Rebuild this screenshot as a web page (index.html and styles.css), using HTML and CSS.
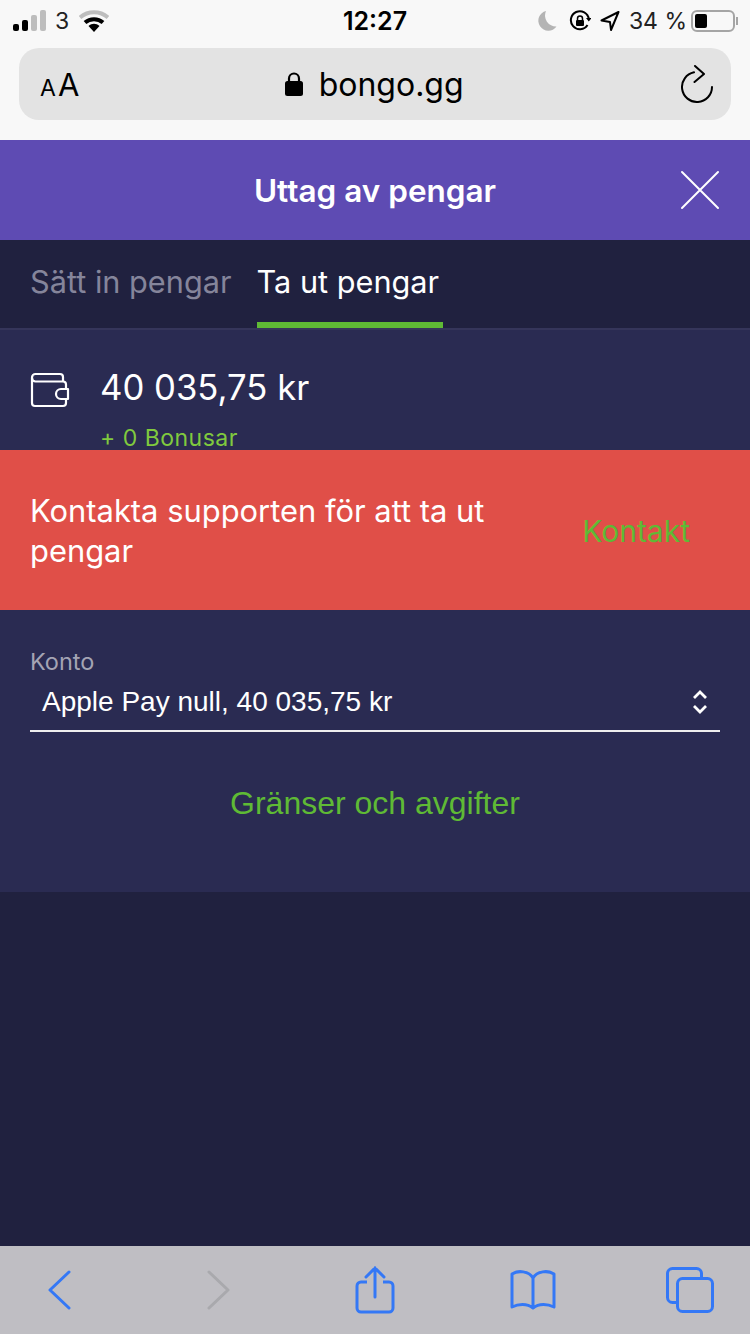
FILE: index.html
```html
<!DOCTYPE html>
<html lang="sv">
<head>
  <meta charset="UTF-8">
  <title>Uttag av pengar</title>
  <link rel="stylesheet" href="styles.css">
</head>
<body>

  <div class="browser-top">
    <div class="statusbar">
      <div class="status-left">
        <svg class="signal" width="34" height="22" viewBox="0 0 34 22">
          <rect x="0" y="14" width="6" height="7" rx="2" fill="#000"/>
          <rect x="9" y="10" width="6" height="11" rx="2" fill="#000"/>
          <rect x="18" y="5" width="6" height="16" rx="2" fill="#bdbdbd"/>
          <rect x="27" y="0" width="6" height="21" rx="2" fill="#bdbdbd"/>
        </svg>
        <span class="carrier">3</span>
        <svg class="wifi" width="30" height="22" viewBox="0 0 30 22">
          <path d="M1 7.500C9 .5 21 .5 29 7.500" fill="none" stroke="#bdbdbd" stroke-width="4"/>
          <path d="M6 12.500C11 8 19 8 24 12.500" fill="none" stroke="#000" stroke-width="4"/>
          <path d="M9.500 16C13 13 17 13 20.500 16L15 22Z" fill="#000"/>
        </svg>
      </div>
      <div class="clock">12:27</div>
      <div class="status-right">
        <svg class="moon" width="20" height="22" viewBox="0 0 20 22">
          <path d="M9 1a10 10 0 1 0 10.500 15.500A11 11 0 0 1 9 1Z" fill="#b4b4b4"/>
        </svg>
        <svg class="rotlock" width="22" height="22" viewBox="0 0 22 22">
          <path d="M18.500 15A9 9 0 1 1 19.800 9" fill="none" stroke="#000" stroke-width="2"/>
          <path d="M17 8h5.500l-2.700 3.500Z" fill="#000"/>
          <rect x="7" y="10" width="8" height="6" rx="1" fill="#000"/>
          <path d="M8.500 10V8.500a2.500 2.500 0 0 1 5 0V10" fill="none" stroke="#000" stroke-width="1.500"/>
        </svg>
        <svg class="arrow" width="20" height="22" viewBox="0 0 20 22">
          <path d="M18.500 2 1.500 10.500l8.500 1.500 1 8Z" fill="none" stroke="#000" stroke-width="2" stroke-linejoin="round"/>
        </svg>
        <span class="percent">34 %</span>
        <div class="battery"><div class="battery-level"></div></div>
        <div class="battery-cap"></div>
      </div>
    </div>
    <div class="urlbar">
      <div class="text-size"><span class="small-a">A</span><span class="big-a">A</span></div>
      <div class="address">
        <svg width="18" height="26" viewBox="0 0 18 26">
          <path d="M4 11V7.500a5 5 0 0 1 10 0V11" fill="none" stroke="#000" stroke-width="2.200"/>
          <rect x="0" y="10" width="18" height="15" rx="2.500" fill="#000"/>
        </svg>
        <span>bongo.gg</span>
      </div>
      <svg class="reload" width="32" height="38" viewBox="0 0 32 38">
        <path d="M13 7.300A15 15 0 1 0 31 22" fill="none" stroke="#000" stroke-width="2" stroke-linecap="round"/>
        <path d="M14 1l9 8-9.500 8" fill="none" stroke="#000" stroke-width="2" stroke-linecap="round" stroke-linejoin="round"/>
      </svg>
    </div>
  </div>

  <div class="modal-header">
    <h2>Uttag av pengar</h2>
    <svg class="close" width="40" height="40" viewBox="0 0 40 40">
      <path d="M2 2l36 36M38 2 2 38" stroke="#fff" stroke-width="2" stroke-linecap="round"/>
    </svg>
  </div>

  <div class="tabs">
    <a class="tab">Sätt in pengar</a>
    <a class="tab active">Ta ut pengar</a>
  </div>

  <div class="balance">
    <svg class="wallet" width="40" height="36" viewBox="0 0 40 36">
      <path d="M33 9.500V5a3 3 0 0 0-3-3H5.500A3.500 3.500 0 0 0 2 5.500V31a3 3 0 0 0 3 3h28a3 3 0 0 0 3-3v-4" fill="none" stroke="#fff" stroke-width="2.200"/>
      <path d="M2 6a3.500 3.500 0 0 0 3.500 3.500H33a3 3 0 0 1 3 3V17" fill="none" stroke="#fff" stroke-width="2.200"/>
      <path d="M38 17H31a5 5 0 0 0 0 10h7Z" fill="none" stroke="#fff" stroke-width="2.200" stroke-linejoin="round"/>
    </svg>
    <div>
      <div class="amount">40 035,75 kr</div>
      <div class="bonus">+ 0 Bonusar</div>
    </div>
  </div>

  <div class="alert">
    <p>Kontakta supporten för att ta ut pengar</p>
    <a class="alert-link">Kontakt</a>
  </div>

  <div class="form-section">
    <label>Konto</label>
    <div class="select">
      <span>Apple Pay null, 40 035,75 kr</span>
      <svg width="16" height="24" viewBox="0 0 16 24">
        <path d="M2 8l6-6 6 6M2 16l6 6 6-6" fill="none" stroke="#fff" stroke-width="2.800"/>
      </svg>
    </div>
    <a class="limits">Gränser och avgifter</a>
  </div>

  <div class="filler"></div>

  <div class="toolbar">
    <div class="tool">
      <svg width="26" height="40" viewBox="0 0 26 40">
        <path d="M22 2 3 20l19 18" fill="none" stroke="#3478f6" stroke-width="3" stroke-linecap="round" stroke-linejoin="round"/>
      </svg>
    </div>
    <div class="tool">
      <svg width="26" height="40" viewBox="0 0 26 40">
        <path d="M4 2l19 18L4 38" fill="none" stroke="#a9a9ad" stroke-width="3" stroke-linecap="round" stroke-linejoin="round"/>
      </svg>
    </div>
    <div class="tool">
      <svg width="40" height="48" viewBox="0 0 40 48">
        <path d="M12 16H6a4 4 0 0 0-4 4v22a4 4 0 0 0 4 4h28a4 4 0 0 0 4-4V20a4 4 0 0 0-4-4h-6" fill="none" stroke="#3478f6" stroke-width="3"/>
        <path d="M20 31V2M11 11l9-9 9 9" fill="none" stroke="#3478f6" stroke-width="3" stroke-linecap="round"/>
      </svg>
    </div>
    <div class="tool">
      <svg width="46" height="40" viewBox="0 0 46 40">
        <path d="M23 8C19 1 8 0 2 4v33c6-3 15-4 21 1 6-5 15-4 21-1V4C38 0 27 1 23 8Zm0 0v30" fill="none" stroke="#3478f6" stroke-width="3" stroke-linejoin="round"/>
      </svg>
    </div>
    <div class="tool">
      <svg width="48" height="46" viewBox="0 0 48 46">
        <path d="M11 35.500H6.500a5 5 0 0 1-5-5V6.500a5 5 0 0 1 5-5h24a5 5 0 0 1 5 5v5" fill="none" stroke="#3478f6" stroke-width="3"/>
        <rect x="11.500" y="11.500" width="35" height="33" rx="5" fill="none" stroke="#3478f6" stroke-width="3"/>
      </svg>
    </div>
  </div>

</body>
</html>
```

FILE: styles.css
```css
html, body {
  margin: 0;
  padding: 0;
}

body {
  width: 750px;
  height: 1334px;
  display: flex;
  flex-direction: column;
  overflow: hidden;
  font-family: Inter, "Noto Sans", sans-serif;
  background: #20213f;
  color: #fff;
}

.browser-top {
  height: 140px;
  box-sizing: border-box;
  background: #f8f8f8;
  color: #000;
  padding: 0 19px;
  flex: none;
}

.statusbar {
  height: 48px;
  margin: 0 -7px;
  display: grid;
  grid-template-columns: 1fr auto 1fr;
  align-items: start;
  padding-top: 8px;
  box-sizing: border-box;
}

.status-left {
  display: flex;
  align-items: center;
  gap: 8px;
  height: 26px;
  padding-left: 1px;
}

.carrier {
  font-size: 23px;
  color: #222;
}

.wifi {
  margin-left: 2px;
}

.clock {
  font-size: 25px;
  font-weight: 600;
  line-height: 26px;
}

.status-right {
  display: flex;
  align-items: center;
  justify-content: flex-end;
  gap: 8px;
  height: 26px;
}

.moon {
  margin-right: 4px;
}

.rotlock,
.arrow {
  margin-right: 1px;
}

.percent {
  font-size: 23px;
  color: #222;
  margin-right: -4px;
  white-space: nowrap;
}

.battery {
  width: 44px;
  height: 22px;
  box-sizing: border-box;
  border: 2px solid #a5a5a5;
  border-radius: 6px;
  padding: 2px;
}

.battery-level {
  width: 12px;
  height: 14px;
  background: #000;
  border-radius: 2px;
}

.battery-cap {
  width: 2px;
  height: 8px;
  background: #a5a5a5;
  margin-left: -7px;
}

.urlbar {
  height: 72px;
  background: #e3e3e3;
  border-radius: 20px;
  display: flex;
  align-items: center;
  justify-content: space-between;
  padding: 0 18px 0 21px;
}

.text-size {
  display: flex;
  align-items: baseline;
  font-size: 31px;
  line-height: 1;
}

.small-a {
  font-size: 23px;
  margin-right: 2px;
}

.address {
  display: flex;
  align-items: center;
  gap: 16px;
  font-size: 32px;
  margin-right: 12px;
}

.modal-header {
  height: 100px;
  flex: none;
  background: #5e4bb3;
  display: flex;
  align-items: center;
  justify-content: center;
  position: relative;
}

.modal-header h2 {
  margin: 1px 0 0;
  font-size: 31.500px;
  font-weight: 600;
}

.close {
  position: absolute;
  right: 30px;
  top: 30px;
}

.tabs {
  height: 88px;
  flex: none;
  display: flex;
  gap: 25px;
  padding-left: 30px;
  border-bottom: 2px solid #35355a;
}

.tab {
  font-size: 30.700px;
  line-height: 84px;
  color: #85859b;
  height: 88px;
  box-sizing: border-box;
}

.tab.active {
  color: #fff;
  border-bottom: 6px solid #5fba35;
  padding-right: 4px;
}

.balance {
  height: 120px;
  flex: none;
  box-sizing: border-box;
  background: #2a2b52;
  display: flex;
  gap: 30px;
  padding: 33px 30px 0;
}

.wallet {
  margin-top: 9px;
}

.amount {
  font-size: 34.700px;
  line-height: 48px;
}

.bonus {
  font-size: 23px;
  line-height: 24px;
  margin-top: 15px;
  color: #80ca3e;
  letter-spacing: 0.5px;
}

.alert {
  height: 160px;
  flex: none;
  box-sizing: border-box;
  background: #e04f48;
  display: flex;
  align-items: center;
  justify-content: space-between;
  padding: 2px 60px 0 30px;
}

.alert p {
  margin: 0;
  width: 500px;
  font-size: 30.900px;
  line-height: 40.500px;
}

.alert-link {
  color: #5fba35;
  font-size: 30px;
}

.form-section {
  height: 282px;
  flex: none;
  box-sizing: border-box;
  background: #2a2b52;
  padding: 38px 30px 0;
}

.form-section label {
  display: block;
  font-size: 23.500px;
  line-height: 28px;
  color: #a4a4b4;
}

.select {
  height: 36px;
  margin-top: 4px;
  padding: 4px 12px 10px;
  border-bottom: 2px solid #eee;
  display: flex;
  align-items: center;
  justify-content: space-between;
  font-family: "Liberation Sans", Arial, sans-serif;
  font-size: 28px;
}

.limits {
  display: block;
  margin-top: 53px;
  text-align: center;
  font-family: "Liberation Sans", Arial, sans-serif;
  font-size: 32px;
  color: #5fba35;
}

.filler {
  flex: 1;
}

.toolbar {
  height: 88px;
  flex: none;
  box-sizing: border-box;
  background: #bfbec3;
  display: flex;
  align-items: center;
  justify-content: space-between;
  padding: 0 10px;
}

.tool {
  width: 100px;
  display: flex;
  justify-content: center;
}
```
